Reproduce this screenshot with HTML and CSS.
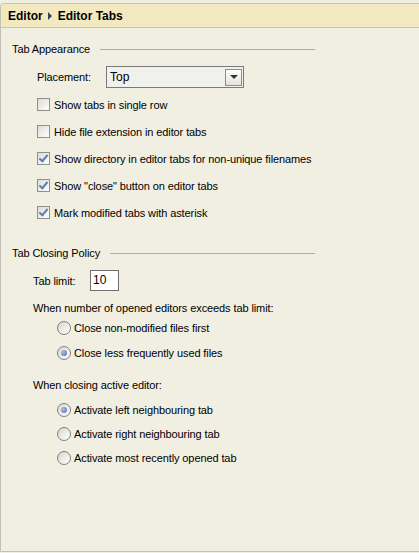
FILE: index.html
```html
<!DOCTYPE html>
<html>
<head>
    <title>Editor Tabs</title>
    <link rel="stylesheet" href="styles.css">
</head>
<body>
    <div class="panel">
        <!-- 标题栏 -->
        <div class="header">
            <span>Editor</span>
            <span class="crumb-arrow"></span>
            <span>Editor Tabs</span>
        </div>

        <div class="content">
            <!-- Tab Appearance -->
            <div class="section-title">
                <span>Tab Appearance</span>
                <span class="rule"></span>
            </div>

            <div class="placement-row">
                <span class="label">Placement:</span>
                <div class="select">
                    <span class="select-value">Top</span>
                    <span class="select-btn"><span class="tri"></span></span>
                </div>
            </div>

            <div class="checks">
                <div class="check-row"><span class="box"></span>Show tabs in single row</div>
                <div class="check-row"><span class="box"></span>Hide file extension in editor tabs</div>
                <div class="check-row"><span class="box checked"></span>Show directory in editor tabs for non-unique filenames</div>
                <div class="check-row"><span class="box checked"></span>Show "close" button on editor tabs</div>
                <div class="check-row"><span class="box checked"></span>Mark modified tabs with asterisk</div>
            </div>

            <!-- Tab Closing Policy -->
            <div class="section-title second">
                <span>Tab Closing Policy</span>
                <span class="rule"></span>
            </div>

            <div class="limit-row">
                <span class="label">Tab limit:</span>
                <div class="text-input">10</div>
            </div>

            <div class="group-label">When number of opened editors exceeds tab limit:</div>
            <div class="radios">
                <div class="radio-row"><span class="radio"></span>Close non-modified files first</div>
                <div class="radio-row"><span class="radio on"></span>Close less frequently used files</div>
            </div>

            <div class="group-label second">When closing active editor:</div>
            <div class="radios tight">
                <div class="radio-row"><span class="radio on"></span>Activate left neighbouring tab</div>
                <div class="radio-row"><span class="radio"></span>Activate right neighbouring tab</div>
                <div class="radio-row"><span class="radio"></span>Activate most recently opened tab</div>
            </div>
        </div>
    </div>
</body>
</html>
```

FILE: styles.css
```css
/* 样式定义 */
body {
    margin: 0;
    padding: 0;
    background-color: #F1EFE2;
    font-family: "Liberation Sans", Arial, sans-serif;
    font-size: 11px;
    letter-spacing: -0.1px;
    color: #000;
    overflow: hidden;
}

.panel {
    margin-top: 3px;
    margin-right: -6px;
    height: 547px;
    border: 1px solid #C3C0B4;
    border-top-left-radius: 4px;
    background-color: #F1EFE2;
}

.header {
    height: 23px;
    display: flex;
    align-items: center;
    padding-left: 7px;
    background-color: #F3E9C1;
    border-bottom: 1px solid #C8C4B4;
    border-top-left-radius: 4px;
    font-weight: bold;
    font-size: 12px;
    letter-spacing: 0;
}

.crumb-arrow {
    width: 0;
    height: 0;
    margin: 0 6px 0 5px;
    border-top: 4px solid transparent;
    border-bottom: 4px solid transparent;
    border-left: 4px solid #36465A;
}

.content {
    padding: 14px 0 0 11px;
}

.section-title {
    width: 303px;
    height: 14px;
    display: flex;
    align-items: center;
}

.section-title.second {
    margin-top: 20px;
}

.section-title .rule {
    flex: 1;
    height: 1px;
    margin-left: 10px;
    background-color: #ADABA2;
}

.label {
    display: inline-block;
}

.placement-row {
    display: flex;
    align-items: center;
    margin: 10px 0 0 25px;
}

.placement-row .label {
    width: 69px;
}

.select {
    width: 136px;
    height: 20px;
    display: flex;
    align-items: center;
    justify-content: space-between;
    border: 1px solid #7A7A7A;
    background-color: #F0F0EC;
    font-size: 12px;
    letter-spacing: 0;
}

.select-value {
    padding-left: 3px;
}

.select-btn {
    width: 15px;
    height: 15px;
    margin-right: 1px;
    display: flex;
    align-items: center;
    justify-content: center;
    border: 1px solid #8C8C8C;
    background: linear-gradient(to bottom, #FFFFFF, #E4E2DA);
}

.tri {
    width: 0;
    height: 0;
    border-left: 4px solid transparent;
    border-right: 4px solid transparent;
    border-top: 4px solid #333;
}

.checks {
    margin: 3px 0 0 25px;
}

.check-row {
    height: 27px;
    display: flex;
    align-items: center;
}

.box {
    width: 11px;
    height: 11px;
    margin-right: 4px;
    border: 1px solid #8E8F8F;
    background: linear-gradient(135deg, #DCDBD3, #FFFFFF);
    position: relative;
}

.box.checked::after {
    content: "";
    position: absolute;
    left: 3px;
    top: 0px;
    width: 3px;
    height: 7px;
    border-right: 2px solid #5C7DB4;
    border-bottom: 2px solid #5C7DB4;
    transform: rotate(40deg);
}

.limit-row {
    display: flex;
    align-items: center;
    margin: 10px 0 0 21px;
}

.limit-row .label {
    width: 57px;
}

.text-input {
    width: 25px;
    height: 19px;
    line-height: 19px;
    padding-left: 2px;
    border: 1px solid #6F6F6F;
    background-color: #FFFFFF;
    font-size: 12px;
    letter-spacing: 0;
}

.group-label {
    height: 14px;
    line-height: 14px;
    margin: 10px 0 0 21px;
}

.group-label.second {
    margin-top: 13px;
}

.radios {
    margin-left: 45px;
}

.radio-row {
    height: 25px;
    display: flex;
    align-items: center;
}

.radios.tight {
    margin-top: 6px;
}

.radios.tight .radio-row {
    height: 24px;
}

.radio {
    width: 12px;
    height: 12px;
    margin-right: 3px;
    border: 1px solid #7E7E7A;
    border-radius: 50%;
    background: linear-gradient(135deg, #D8D7CF, #FFFFFF);
    display: flex;
    align-items: center;
    justify-content: center;
}

.radio.on::after {
    content: "";
    width: 6px;
    height: 6px;
    border-radius: 50%;
    background: radial-gradient(circle at 35% 35%, #A9C0E6, #4B6DAF);
}
```
